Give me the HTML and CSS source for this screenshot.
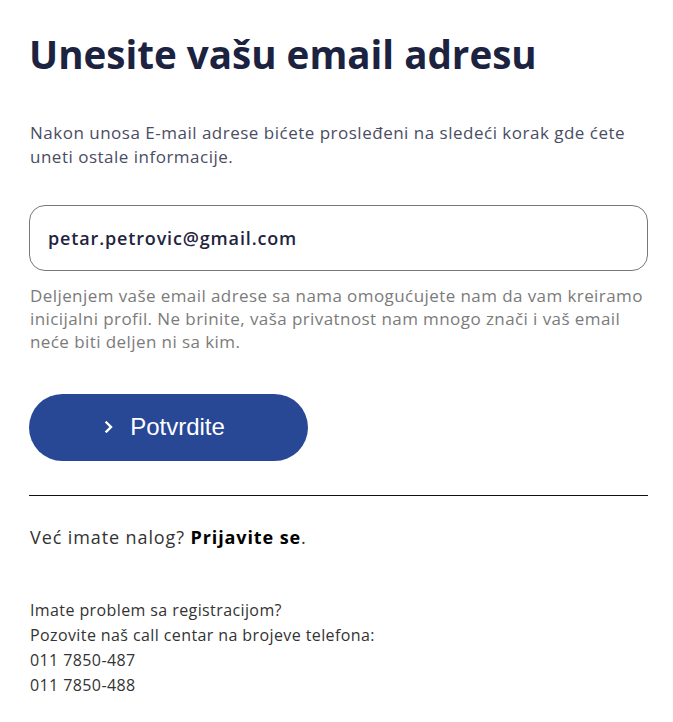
FILE: index.html
```html
<!DOCTYPE html>
<html lang="sr">
<head>
<meta charset="utf-8">
<title>Registracija</title>
<link rel="stylesheet" href="styles.css">
</head>
<body>
<main class="page">
  <h1 class="title">Unesite vašu email adresu</h1>
  <p class="intro">Nakon unosa E-mail adrese bićete prosleđeni na sledeći korak gde ćete uneti ostale informacije.</p>
  <div class="field">
    <input class="email" type="email" value="petar.petrovic@gmail.com">
  </div>
  <p class="hint">Deljenjem vaše email adrese sa nama omogućujete nam da vam kreiramo inicijalni profil. Ne brinite, vaša privatnost nam mnogo znači i vaš email neće biti deljen ni sa kim.</p>
  <button class="submit" type="button">
    <svg class="chev" width="10" height="12" viewBox="0 0 10 12"><path d="M2.5 1.5 L7 6 L2.5 10.5" fill="none" stroke="#fff" stroke-width="2.4" stroke-linecap="square"/></svg>
    <span>Potvrdite</span>
  </button>
  <hr class="divider">
  <p class="login">Već imate nalog? <a class="login-link" href="#">Prijavite se</a>.</p>
  <div class="help">
    <p>Imate problem sa registracijom?</p>
    <p>Pozovite naš call centar na brojeve telefona:</p>
    <p>011 7850-487</p>
    <p>011 7850-488</p>
  </div>
</main>
</body>
</html>
```
FILE: styles.css
```css
html, body {
  margin: 0;
  padding: 0;
  background: #fff;
}
body {
  font-family: "Open Sans", "Noto Sans", sans-serif;
}
.page {
  width: 619px;
  padding: 24px 0 0 29px;
  display: flex;
  flex-direction: column;
}
.title {
  margin: 0;
  font-size: 38.6px;
  line-height: 60px;
  font-weight: 700;
  color: #1c2340;
}
.intro {
  margin: 37px 0 0 1px;
  font-size: 17px;
  line-height: 24px;
  font-weight: 400;
  letter-spacing: 0.5px;
  color: #4a4d63;
}
.field {
  margin-top: 36px;
}
.email {
  box-sizing: border-box;
  display: block;
  width: 619px;
  height: 66px;
  border: 1px solid #777;
  border-radius: 16px;
  padding: 0 18px;
  font-family: inherit;
  font-size: 18px;
  font-weight: 600;
  letter-spacing: 0.85px;
  color: #1f2440;
  outline: none;
  background: #fff;
}
.hint {
  margin: 13px 0 0 1px;
  font-size: 17px;
  line-height: 23px;
  letter-spacing: 0.42px;
  color: #7b7b7b;
}
.submit {
  margin-top: 41px;
  width: 279px;
  height: 67px;
  border: none;
  border-radius: 34px;
  background: #284896;
  color: #fff;
  display: flex;
  align-items: center;
  justify-content: center;
  gap: 16px;
  font-family: "Liberation Sans", Arial, sans-serif;
  font-size: 24px;
  padding: 0 0 2px 0;
}
.chev {
  display: block;
  margin-left: -8px;
}
.divider {
  margin: 34px 0 0 0;
  width: 619px;
  border: none;
  border-top: 1px solid #111;
  height: 0;
}
.login {
  margin: 28px 0 0 1px;
  font-size: 18px;
  line-height: 26px;
  letter-spacing: 0.9px;
  color: #333;
}
.login-link {
  color: #000;
  font-weight: 700;
  text-decoration: none;
}
.help {
  margin-top: 48px;
  font-size: 16px;
  line-height: 25px;
  letter-spacing: 0.4px;
  color: #333;
}
.help p {
  margin: 0 0 0 1px;
}
```
